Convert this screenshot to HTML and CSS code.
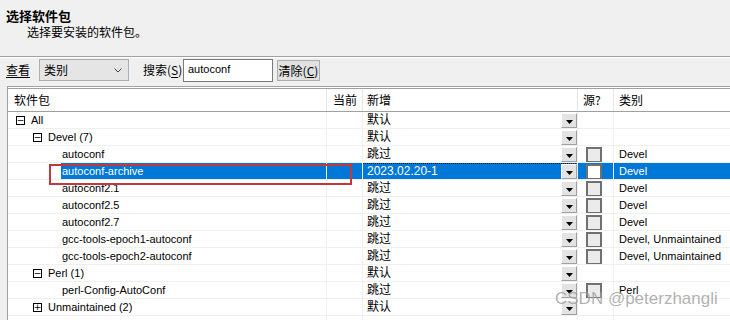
FILE: index.html
```html
<!DOCTYPE html>
<html lang="zh-CN">
<head>
<meta charset="utf-8">
<title>选择软件包</title>
<link rel="stylesheet" href="styles.css">
</head>
<body>
<div class="head">
  <div class="title">选择软件包</div>
  <div class="subtitle">选择要安装的软件包。</div>
</div>
<div class="toolbar">
  <span class="lbl view-lbl"><u>查看</u></span>
  <div class="combo"><span>类别</span><svg class="chev" width="8" height="5" viewBox="0 0 8 5"><path d="M0.5 0.5 L4 4 L7.5 0.5" fill="none" stroke="#444" stroke-width="1"/></svg></div>
  <span class="lbl search-lbl">搜索(<u>S</u>)</span>
  <div class="input">autoconf</div>
  <div class="btn">清除(<u>C</u>)</div>
</div>
<div class="list">
  <div class="row hdr">
    <div class="c c1">软件包</div>
    <div class="c c2">当前</div>
    <div class="c c3">新增</div>
    <div class="c c4">源?</div>
    <div class="c c5">类别</div>
  </div>

  <div class="row">
    <div class="c c1 lv0"><span class="tog">−</span><span class="name">All</span></div>
    <div class="c c2"></div>
    <div class="c c3"><span class="nv">默认</span><span class="dd"><svg width="7" height="4" viewBox="0 0 7 4"><path d="M0 0 H7 L3.5 4 Z" fill="#000"/></svg></span></div>
    <div class="c c4"></div>
    <div class="c c5"></div>
  </div>

  <div class="row">
    <div class="c c1 lv1"><span class="tog">−</span><span class="name">Devel (7)</span></div>
    <div class="c c2"></div>
    <div class="c c3"><span class="nv">默认</span><span class="dd"><svg width="7" height="4" viewBox="0 0 7 4"><path d="M0 0 H7 L3.5 4 Z" fill="#000"/></svg></span></div>
    <div class="c c4"></div>
    <div class="c c5"></div>
  </div>

  <div class="row">
    <div class="c c1 leaf"><span class="name">autoconf</span></div>
    <div class="c c2"></div>
    <div class="c c3"><span class="nv">跳过</span><span class="dd"><svg width="7" height="4" viewBox="0 0 7 4"><path d="M0 0 H7 L3.5 4 Z" fill="#000"/></svg></span></div>
    <div class="c c4"><span class="cb"></span></div>
    <div class="c c5">Devel</div>
  </div>

  <div class="row sel">
    <div class="c c1 leaf"><span class="name">autoconf-archive</span></div>
    <div class="c c2"></div>
    <div class="c c3"><span class="nv">2023.02.20-1</span><span class="dd"><svg width="7" height="4" viewBox="0 0 7 4"><path d="M0 0 H7 L3.5 4 Z" fill="#000"/></svg></span></div>
    <div class="c c4"><span class="cb"></span></div>
    <div class="c c5">Devel</div>
  </div>

  <div class="row">
    <div class="c c1 leaf"><span class="name">autoconf2.1</span></div>
    <div class="c c2"></div>
    <div class="c c3"><span class="nv">跳过</span><span class="dd"><svg width="7" height="4" viewBox="0 0 7 4"><path d="M0 0 H7 L3.5 4 Z" fill="#000"/></svg></span></div>
    <div class="c c4"><span class="cb"></span></div>
    <div class="c c5">Devel</div>
  </div>

  <div class="row">
    <div class="c c1 leaf"><span class="name">autoconf2.5</span></div>
    <div class="c c2"></div>
    <div class="c c3"><span class="nv">跳过</span><span class="dd"><svg width="7" height="4" viewBox="0 0 7 4"><path d="M0 0 H7 L3.5 4 Z" fill="#000"/></svg></span></div>
    <div class="c c4"><span class="cb"></span></div>
    <div class="c c5">Devel</div>
  </div>

  <div class="row">
    <div class="c c1 leaf"><span class="name">autoconf2.7</span></div>
    <div class="c c2"></div>
    <div class="c c3"><span class="nv">跳过</span><span class="dd"><svg width="7" height="4" viewBox="0 0 7 4"><path d="M0 0 H7 L3.5 4 Z" fill="#000"/></svg></span></div>
    <div class="c c4"><span class="cb"></span></div>
    <div class="c c5">Devel</div>
  </div>

  <div class="row">
    <div class="c c1 leaf"><span class="name">gcc-tools-epoch1-autoconf</span></div>
    <div class="c c2"></div>
    <div class="c c3"><span class="nv">跳过</span><span class="dd"><svg width="7" height="4" viewBox="0 0 7 4"><path d="M0 0 H7 L3.5 4 Z" fill="#000"/></svg></span></div>
    <div class="c c4"><span class="cb"></span></div>
    <div class="c c5">Devel, Unmaintained</div>
  </div>

  <div class="row">
    <div class="c c1 leaf"><span class="name">gcc-tools-epoch2-autoconf</span></div>
    <div class="c c2"></div>
    <div class="c c3"><span class="nv">跳过</span><span class="dd"><svg width="7" height="4" viewBox="0 0 7 4"><path d="M0 0 H7 L3.5 4 Z" fill="#000"/></svg></span></div>
    <div class="c c4"><span class="cb"></span></div>
    <div class="c c5">Devel, Unmaintained</div>
  </div>

  <div class="row">
    <div class="c c1 lv1"><span class="tog">−</span><span class="name">Perl (1)</span></div>
    <div class="c c2"></div>
    <div class="c c3"><span class="nv">默认</span><span class="dd"><svg width="7" height="4" viewBox="0 0 7 4"><path d="M0 0 H7 L3.5 4 Z" fill="#000"/></svg></span></div>
    <div class="c c4"></div>
    <div class="c c5"></div>
  </div>

  <div class="row">
    <div class="c c1 leaf"><span class="name">perl-Config-AutoConf</span></div>
    <div class="c c2"></div>
    <div class="c c3"><span class="nv">跳过</span><span class="dd"><svg width="7" height="4" viewBox="0 0 7 4"><path d="M0 0 H7 L3.5 4 Z" fill="#000"/></svg></span></div>
    <div class="c c4"><span class="cb"></span></div>
    <div class="c c5">Perl</div>
  </div>

  <div class="row">
    <div class="c c1 lv1"><span class="tog">+</span><span class="name">Unmaintained (2)</span></div>
    <div class="c c2"></div>
    <div class="c c3"><span class="nv">默认</span><span class="dd"><svg width="7" height="4" viewBox="0 0 7 4"><path d="M0 0 H7 L3.5 4 Z" fill="#000"/></svg></span></div>
    <div class="c c4"></div>
    <div class="c c5"></div>
  </div>

  <div class="row">
    <div class="c c1"></div>
    <div class="c c2"></div>
    <div class="c c3"></div>
    <div class="c c4"></div>
    <div class="c c5"></div>
  </div>
</div>

<div class="mark-box"></div>
<div class="watermark">CSDN @peterzhangli</div>
</body>
</html>
```

FILE: styles.css
```css
html, body {
  margin: 0;
  padding: 0;
}
body {
  width: 730px;
  height: 320px;
  overflow: hidden;
  background: #f0f0f0;
  color: #000;
  font-family: "Liberation Sans", "Noto Sans CJK SC", sans-serif;
  font-size: 11px;
  position: relative;
}

/* header */
.head {
  box-sizing: border-box;
  height: 57px;
  padding: 7px 0 0 6px;
  border-bottom: 1px solid #a0a0a0;
  box-shadow: 0 1px 0 #ffffff;
  font-family: "Noto Sans CJK SC", sans-serif;
}
.title {
  font-size: 13px;
  font-weight: bold;
  line-height: 17px;
}
.subtitle {
  font-size: 12px;
  line-height: 16px;
  padding-left: 21px;
  margin-top: 0;
}

/* toolbar */
.toolbar {
  box-sizing: border-box;
  height: 29px;
  padding: 2px 0 0 6px;
  display: flex;
  align-items: flex-start;
  font-family: "Noto Sans CJK SC", sans-serif;
  font-size: 12px;
}
.lbl {
  line-height: 22px;
  height: 22px;
}
.lbl u {
  text-decoration: underline;
  text-underline-offset: 2px;
}
.view-lbl {
  width: 33px;
}
.combo {
  box-sizing: border-box;
  width: 90px;
  height: 22px;
  background: #e5e5e5;
  border: 1px solid #adadad;
  display: flex;
  align-items: center;
  justify-content: space-between;
  padding: 0 6px 0 4px;
  line-height: 20px;
}
.chev {
  display: block;
}
.search-lbl {
  margin-left: 14px;
  width: 40px;
  font-size: 12px;
}
.input {
  box-sizing: border-box;
  width: 90px;
  height: 23px;
  background: #fff;
  border: 1px solid #7a7a7a;
  padding: 0 0 0 4px;
  font-family: "Liberation Sans", sans-serif;
  font-size: 11px;
  line-height: 19px;
}
.btn {
  box-sizing: border-box;
  margin: 1px 0 0 4px;
  width: 43px;
  height: 21px;
  background: #e1e1e1;
  border: 1px solid #adadad;
  text-align: center;
  line-height: 19px;
  font-size: 12px;
}

/* list */
.list {
  margin-left: 7px;
  border-top: 1px solid #a0a0a0;
  border-left: 1px solid #a0a0a0;
  background: #fff;
  padding-top: 1px;
}
.row {
  display: grid;
  grid-template-columns: 319px 36px 215px 36px 1fr;
  box-sizing: border-box;
  height: 17px;
  border-bottom: 1px solid #f0f0f0;
}
.c {
  box-sizing: border-box;
  border-right: 1px solid #f0f0f0;
  height: 16px;
  line-height: 16px;
  white-space: nowrap;
  overflow: hidden;
  display: flex;
  align-items: center;
}
.c5 {
  border-right: none;
  padding-left: 5px;
}
.hdr {
  height: 24px;
  border-top: 1px solid #a0a0a0;
  border-bottom: 1px solid #a0a0a0;
  font-family: "Noto Sans CJK SC", sans-serif;
  font-size: 12px;
}
.hdr .c {
  height: 22px;
  line-height: 22px;
  border-right-color: #e5e5e5;
}
.hdr .c1 { padding-left: 6px; }
.hdr .c2 { padding-left: 6px; }
.hdr .c3 { padding-left: 4px; }
.hdr .c4 { padding-left: 5px; }
.hdr .c5 { padding-left: 5px; }

/* tree column */
.lv0 { padding-left: 8px; }
.lv1 { padding-left: 25px; }
.leaf { padding-left: 53px; }
.tog {
  box-sizing: border-box;
  width: 9px;
  height: 9px;
  border: 1px solid #000;
  font-size: 9px;
  line-height: 6px;
  text-align: center;
  margin-right: 5px;
  flex: none;
  font-family: "DejaVu Sans", sans-serif;
  display: flex;
  align-items: center;
  justify-content: center;
  overflow: hidden;
}
.name {
  height: 16px;
  line-height: 16px;
  flex: 1;
  padding-left: 1px;
}

/* new column */
.c3 {
  padding-left: 4px;
  justify-content: space-between;
}
.nv {
  font-family: "Liberation Sans", "Noto Sans CJK SC", sans-serif;
}
.row:not(.hdr) .nv:lang(zh-CN) {
  font-size: 12px;
}
.dd {
  box-sizing: border-box;
  width: 16px;
  height: 15px;
  margin-top: 1px;
  background: #e3e3e3;
  border-top: 1px solid #fff;
  border-left: 1px solid #fff;
  border-right: 1px solid #a0a0a0;
  border-bottom: 1px solid #a0a0a0;
  display: flex;
  align-items: center;
  justify-content: center;
  padding-top: 2px;
  flex: none;
}
.dd svg { display: block; }

/* source checkbox */
.c4 {
  padding-left: 8px;
}
.cb {
  box-sizing: border-box;
  width: 16px;
  height: 16px;
  margin-top: 1px;
  border: 2px solid #707070;
  background: #ebebeb;
  flex: none;
}

/* selected row */
.sel .c1 .name,
.sel .c2,
.sel .c3,
.sel .c4,
.sel .c5 {
  background: #0078d7;
  color: #fff;
}
.sel .c {
  border-right-color: #e8f1fa;
}
.sel .c3 {
  background-image: repeating-linear-gradient(90deg, #1a1a1a 0 1px, transparent 1px 2px);
  background-size: 100% 1px;
  background-repeat: no-repeat;
}
.sel .cb {
  background: #fff;
}

/* annotation */
.mark-box {
  position: absolute;
  left: 49px;
  top: 164px;
  width: 303px;
  height: 21px;
  box-sizing: border-box;
  border: 2px solid #c1383d;
}
.watermark {
  position: absolute;
  left: 555px;
  top: 289px;
  font-family: "Liberation Sans", sans-serif;
  font-size: 17px;
  color: rgba(110, 110, 110, 0.55);
  text-shadow: 0 0 1px rgba(255,255,255,0.6);
  white-space: nowrap;
}
```
